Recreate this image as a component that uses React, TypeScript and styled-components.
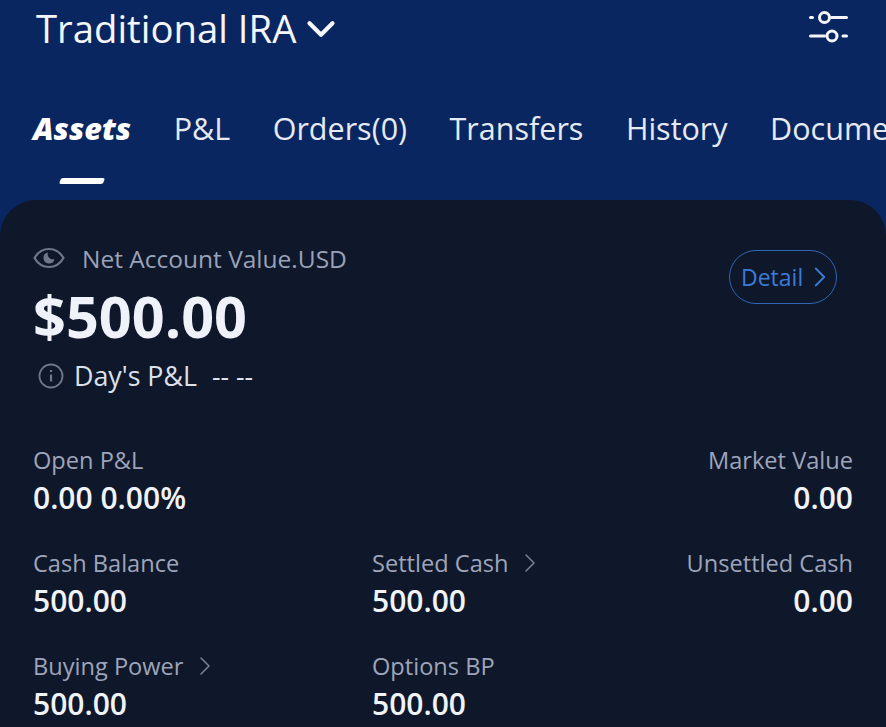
import { createGlobalStyle, styled } from 'styled-components';
import { ChevronDown, ChevronRight } from 'lucide-react';

const GlobalStyle = createGlobalStyle`
  html, body {
    margin: 0;
    padding: 0;
    background: #0a2660;
  }
  body {
    font-family: 'Open Sans', 'Noto Sans', sans-serif;
  }
`;

const Page = styled.div`
  width: 886px;
  height: 727px;
  overflow: hidden;
  background: #0a2660;
`;

const TopBar = styled.header`
  display: flex;
  align-items: center;
  justify-content: space-between;
  height: 56px;
  padding: 0 38px 0 36px;
`;

const AccountTitle = styled.div`
  display: flex;
  align-items: center;
  gap: 2px;
  font-size: 38.3px;
  line-height: 52px;
  height: 54px;
  font-weight: 500;
  color: #f4f6fa;
`;

const TitleChevron = styled(ChevronDown)`
  flex: none;
  margin-top: 2px;
`;

const Tabs = styled.nav`
  display: flex;
  gap: 42.5px;
  height: 144px;
  padding: 47px 0 0 33px;
  box-sizing: border-box;
  white-space: nowrap;
  overflow: hidden;
`;

const Tab = styled.div<{ $active?: boolean }>`
  display: flex;
  flex-direction: column;
  align-items: center;
  flex: none;
  gap: 25px;
  font-size: 30.5px;
  line-height: 50px;
  height: 96px;
  font-weight: ${p => (p.$active ? 800 : 400)};
  font-style: ${p => (p.$active ? 'italic' : 'normal')};
  color: ${p => (p.$active ? '#ffffff' : '#e6eaf2')};
`;

const TabMark = styled.span`
  display: block;
  width: 44px;
  height: 6px;
  border-radius: 2px;
  background: #ffffff;
  transform: skewX(-20deg);
`;

const Card = styled.main`
  height: 527px;
  padding: 40px 33px 0;
  box-sizing: border-box;
  border-radius: 36px 36px 0 0;
  background: #0f172b;
`;

const Summary = styled.section`
  display: flex;
  align-items: flex-start;
  justify-content: space-between;
  height: 200px;
`;

const NetLabel = styled.div`
  display: flex;
  align-items: center;
  gap: 17px;
  height: 36px;
  font-size: 24.5px;
  color: #9aa2b8;
`;

const NetValue = styled.div`
  font-size: 57.6px;
  line-height: 70px;
  margin-top: 5px;
  font-weight: 700;
  color: #eff2f8;
`;

const DayRow = styled.div`
  display: flex;
  align-items: center;
  gap: 10px;
  margin: 5px 0 0 5px;
  font-size: 26.8px;
  line-height: 40px;
  color: #dde1ea;
`;

const DayValue = styled.span`
  margin-left: 5px;
  font-size: 26.5px;
`;

const DetailButton = styled.button`
  display: flex;
  align-items: center;
  width: 108px;
  height: 54px;
  margin: 10px 16px 0 0;
  padding: 0 0 0 11px;
  box-sizing: border-box;
  border: 1.5px solid #2f66b5;
  border-radius: 27px;
  background: transparent;
  color: #3a7bd8;
  font-family: inherit;
  font-size: 23px;
`;

const DetailChevron = styled(ChevronRight)`
  flex: none;
  margin-right: -4px;
`;

const Stats = styled.section`
  display: grid;
  grid-template-columns: 339px 1fr auto;
  grid-auto-rows: 103px;
`;

const Stat = styled.div<{ $right?: boolean }>`
  padding-top: 2px;
  text-align: ${p => (p.$right ? 'right' : 'left')};
`;

const StatLabel = styled.div<{ $right?: boolean }>`
  display: flex;
  align-items: center;
  justify-content: ${p => (p.$right ? 'flex-end' : 'flex-start')};
  gap: 6px;
  height: 36px;
  font-size: 23.6px;
  color: #9ea5ba;
`;

const StatValue = styled.div`
  font-size: 30px;
  line-height: 40px;
  font-weight: 550;
  color: #f0f3f8;
`;

const SlidersIcon = () => (
  <svg width="40" height="34" viewBox="0 0 40 34" fill="none" stroke="#f4f6fa" strokeWidth="3" strokeLinecap="round">
    <path d="M2.500 6.500h2M23.500 6.500h15M2.500 25h14M35 25h3.500" />
    <circle cx="16.500" cy="6.500" r="5" />
    <circle cx="24" cy="25" r="5" />
  </svg>
);

const EyeIcon = () => (
  <svg width="32" height="22" viewBox="0 0 32 22" fill="none">
    <path d="M1.500 11C5 5 10 2 16 2s11 3 14.500 9C27 17 22 20 16 20S5 17 1.500 11Z" stroke="#70778b" strokeWidth="2.200" />
    <path d="M15 5.600a5.500 5.500 0 1 0 6.400 6.400 5 5 0 0 1-6.400-6.400Z" fill="#70778b" />
  </svg>
);

const InfoIcon = () => (
  <svg width="26" height="26" viewBox="0 0 26 26" fill="none" stroke="#70778b" strokeWidth="1.800">
    <circle cx="13" cy="13" r="11.500" />
    <path d="M13 11.500v7" strokeWidth="2.200" />
    <path d="M13 7v2" strokeWidth="2.200" />
  </svg>
);

const stats = [
  { label: 'Open P&L', value: '0.00 0.00%' },
  { label: '', value: '' },
  { label: 'Market Value', value: '0.00', right: true },
  { label: 'Cash Balance', value: '500.00' },
  { label: 'Settled Cash', value: '500.00', more: true },
  { label: 'Unsettled Cash', value: '0.00', right: true },
  { label: 'Buying Power', value: '500.00', more: true },
  { label: 'Options BP', value: '500.00' },
];

const tabs = ['P&L', 'Orders(0)', 'Transfers', 'History', 'Documents'];

export default function App() {
  return (
    <Page>
      <GlobalStyle />
      <TopBar>
        <AccountTitle>
          Traditional IRA
          <TitleChevron size={46} strokeWidth={2.2} />
        </AccountTitle>
        <SlidersIcon />
      </TopBar>
      <Tabs>
        <Tab $active>
          Assets
          <TabMark />
        </Tab>
        {tabs.map(t => (
          <Tab key={t}>{t}</Tab>
        ))}
      </Tabs>
      <Card>
        <Summary>
          <div>
            <NetLabel>
              <EyeIcon />
              Net Account Value.USD
            </NetLabel>
            <NetValue>$500.00</NetValue>
            <DayRow>
              <InfoIcon />
              Day's P&L
              <DayValue>-- --</DayValue>
            </DayRow>
          </div>
          <DetailButton>
            Detail
            <DetailChevron size={34} strokeWidth={1.3} />
          </DetailButton>
        </Summary>
        <Stats>
          {stats.map((s, i) => (
            <Stat key={i} $right={s.right}>
              <StatLabel $right={s.right}>
                {s.label}
                {s.more && <ChevronRight size={32} strokeWidth={1.1} color="#7d8497" />}
              </StatLabel>
              <StatValue>{s.value}</StatValue>
            </Stat>
          ))}
        </Stats>
      </Card>
    </Page>
  );
}
